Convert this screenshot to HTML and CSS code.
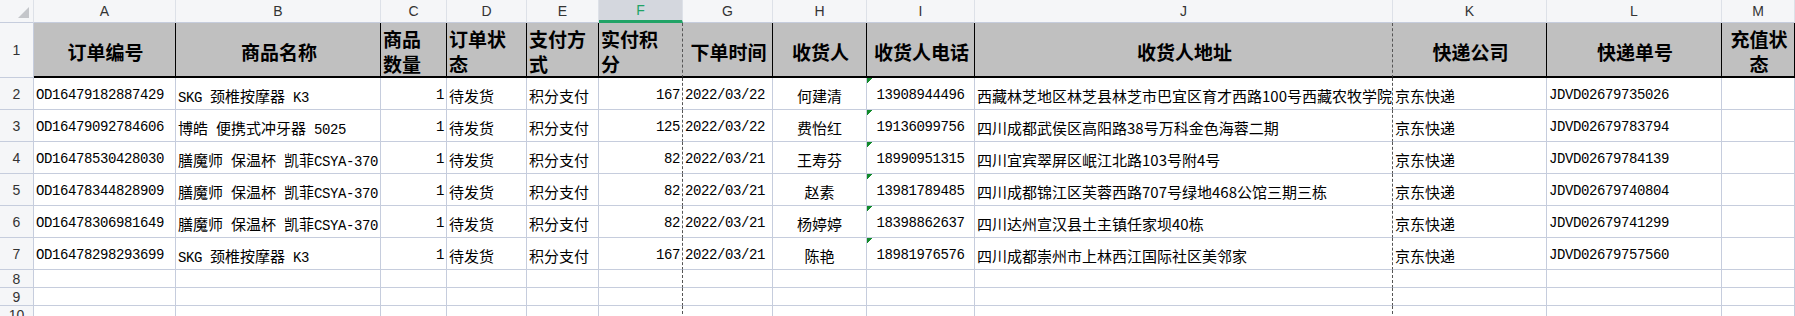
FILE: index.html
```html
<!DOCTYPE html>
<html lang="zh-CN">
<head>
    <meta charset="UTF-8">
    <title>订单表</title>
    <link rel="stylesheet" href="styles.css">
</head>
<body>
    <table class="sheet">
        <colgroup>
            <col style="width:34px"><col style="width:142px"><col style="width:205px"><col style="width:66px">
            <col style="width:80px"><col style="width:72px"><col style="width:84px"><col style="width:90px">
            <col style="width:94px"><col style="width:108px"><col style="width:418px"><col style="width:154px">
            <col style="width:175px"><col style="width:73px">
        </colgroup>
        <tr class="letters">
            <td class="corner"><span class="tri"></span></td>
            <td>A</td><td>B</td><td>C</td><td>D</td><td>E</td><td class="picked">F</td><td>G</td>
            <td>H</td><td>I</td><td>J</td><td>K</td><td>L</td><td>M</td>
        </tr>
        <tr class="head">
            <td class="num">1</td>
            <td>订单编号</td>
            <td>商品名称</td>
            <td class="left">商品<br>数量</td>
            <td class="left">订单状<br>态</td>
            <td class="left">支付方<br>式</td>
            <td class="left brk">实付积<br>分</td>
            <td>下单时间</td>
            <td>收货人</td>
            <td>收货人电话</td>
            <td class="brk">收货人地址</td>
            <td>快递公司</td>
            <td>快递单号</td>
            <td>充值状<br>态</td>
        </tr>
        <tr class="row">
            <td class="num">2</td>
            <td class="mono">OD16479182887429</td>
            <td><span class="mono">SKG </span>颈椎按摩器<span class="mono"> K3</span></td>
            <td class="mono right">1</td>
            <td>待发货</td>
            <td>积分支付</td>
            <td class="mono right brk">167</td>
            <td class="mono">2022/03/22</td>
            <td class="center">何建清</td>
            <td class="mono center flag">13908944496</td>
            <td class="brk">西藏林芝地区林芝县林芝市巴宜区育才西路100号西藏农牧学院</td>
            <td>京东快递</td>
            <td class="mono">JDVD02679735026</td>
            <td></td>
        </tr>
        <tr class="row">
            <td class="num">3</td>
            <td class="mono">OD16479092784606</td>
            <td>博皓<span class="mono"> </span>便携式冲牙器<span class="mono"> 5025</span></td>
            <td class="mono right">1</td>
            <td>待发货</td>
            <td>积分支付</td>
            <td class="mono right brk">125</td>
            <td class="mono">2022/03/22</td>
            <td class="center">费怡红</td>
            <td class="mono center flag">19136099756</td>
            <td class="brk">四川成都武侯区高阳路38号万科金色海蓉二期</td>
            <td>京东快递</td>
            <td class="mono">JDVD02679783794</td>
            <td></td>
        </tr>
        <tr class="row">
            <td class="num">4</td>
            <td class="mono">OD16478530428030</td>
            <td>膳魔师<span class="mono"> </span>保温杯<span class="mono"> </span>凯菲<span class="mono">CSYA-370</span></td>
            <td class="mono right">1</td>
            <td>待发货</td>
            <td>积分支付</td>
            <td class="mono right brk">82</td>
            <td class="mono">2022/03/21</td>
            <td class="center">王寿芬</td>
            <td class="mono center flag">18990951315</td>
            <td class="brk">四川宜宾翠屏区岷江北路103号附4号</td>
            <td>京东快递</td>
            <td class="mono">JDVD02679784139</td>
            <td></td>
        </tr>
        <tr class="row">
            <td class="num">5</td>
            <td class="mono">OD16478344828909</td>
            <td>膳魔师<span class="mono"> </span>保温杯<span class="mono"> </span>凯菲<span class="mono">CSYA-370</span></td>
            <td class="mono right">1</td>
            <td>待发货</td>
            <td>积分支付</td>
            <td class="mono right brk">82</td>
            <td class="mono">2022/03/21</td>
            <td class="center">赵素</td>
            <td class="mono center flag">13981789485</td>
            <td class="brk">四川成都锦江区芙蓉西路707号绿地468公馆三期三栋</td>
            <td>京东快递</td>
            <td class="mono">JDVD02679740804</td>
            <td></td>
        </tr>
        <tr class="row">
            <td class="num">6</td>
            <td class="mono">OD16478306981649</td>
            <td>膳魔师<span class="mono"> </span>保温杯<span class="mono"> </span>凯菲<span class="mono">CSYA-370</span></td>
            <td class="mono right">1</td>
            <td>待发货</td>
            <td>积分支付</td>
            <td class="mono right brk">82</td>
            <td class="mono">2022/03/21</td>
            <td class="center">杨婷婷</td>
            <td class="mono center flag">18398862637</td>
            <td class="brk">四川达州宣汉县土主镇任家坝40栋</td>
            <td>京东快递</td>
            <td class="mono">JDVD02679741299</td>
            <td></td>
        </tr>
        <tr class="row">
            <td class="num">7</td>
            <td class="mono">OD16478298293699</td>
            <td><span class="mono">SKG </span>颈椎按摩器<span class="mono"> K3</span></td>
            <td class="mono right">1</td>
            <td>待发货</td>
            <td>积分支付</td>
            <td class="mono right brk">167</td>
            <td class="mono">2022/03/21</td>
            <td class="center">陈艳</td>
            <td class="mono center flag">18981976576</td>
            <td class="brk">四川成都崇州市上林西江国际社区美邻家</td>
            <td>京东快递</td>
            <td class="mono">JDVD02679757560</td>
            <td></td>
        </tr>
        <tr class="empty">
            <td class="num">8</td>
            <td></td><td></td><td></td><td></td><td></td><td class="brk"></td><td></td>
            <td></td><td></td><td class="brk"></td><td></td><td></td><td></td>
        </tr>
        <tr class="empty">
            <td class="num">9</td>
            <td></td><td></td><td></td><td></td><td></td><td class="brk"></td><td></td>
            <td></td><td></td><td class="brk"></td><td></td><td></td><td></td>
        </tr>
        <tr class="empty">
            <td class="num">10</td>
            <td></td><td></td><td></td><td></td><td></td><td class="brk"></td><td></td>
            <td></td><td></td><td class="brk"></td><td></td><td></td><td></td>
        </tr>
    </table>
</body>
</html>
```

FILE: styles.css
```css
body {
    margin: 0;
    overflow: hidden;
    background: #fff;
}

.sheet {
    table-layout: fixed;
    width: 1795px;
    border-collapse: separate;
    border-spacing: 0;
    font-family: "Noto Sans CJK SC", sans-serif;
    font-size: 15px;
    color: #000;
}

.sheet td {
    box-sizing: border-box;
    border-right: 1px solid #c6cddd;
    border-bottom: 1px solid #c6cddd;
    padding: 0 0 0 2px;
    white-space: nowrap;
    overflow: hidden;
    vertical-align: middle;
}

/* column letters */
.letters td {
    height: 23px;
    background: #f5f6f8;
    border-right-color: #dde1e8;
    font-family: "Liberation Sans", sans-serif;
    font-size: 14px;
    color: #333;
    text-align: center;
    padding: 0;
}
.letters td.picked {
    background: #d4d7de;
    border-bottom: 3px solid #21a366;
    color: #21a366;
}
.corner {
    position: relative;
}
.tri {
    position: absolute;
    right: 4px;
    bottom: 4px;
    width: 0;
    height: 0;
    border-left: 11px solid transparent;
    border-bottom: 11px solid #c4c6ca;
}

/* row numbers */
.sheet td.num {
    background: #f5f6f8;
    font-family: "Liberation Sans", sans-serif;
    font-size: 14px;
    color: #333;
    text-align: center;
    padding: 0;
}

/* title row */
.head td {
    height: 50px;
    background: #c0c0c0;
    border-right: 1px solid #000;
    border-bottom: 2px solid #000;
    font-weight: 700;
    font-size: 19px;
    line-height: 25px;
    text-align: center;
    padding-top: 3px;
    white-space: normal;
}
.head td.left {
    text-align: left;
}
.head td.num {
    border-right: 1px solid #c6cddd;
    border-bottom: 1px solid #c6cddd;
    font-weight: 400;
    font-size: 14px;
    padding-top: 0;
}

.row td {
    height: 32px;
    padding-top: 3px;
}
.empty td {
    height: 18px;
}
.empty td.num {
    line-height: 16px;
}

.mono {
    font-family: "Liberation Mono", monospace;
    font-size: 14px;
    letter-spacing: -0.4px;
}
.right {
    text-align: right;
}
.sheet td.right {
    padding-right: 2px;
}
.center {
    text-align: center;
}
.sheet td.center {
    padding-left: 0;
}

/* page break lines */
.sheet td.brk {
    border-right: 1px dashed #555;
}

/* number stored as text marker */
.flag {
    background: linear-gradient(135deg, #118a2c 4px, transparent 4px) no-repeat;
}
```
